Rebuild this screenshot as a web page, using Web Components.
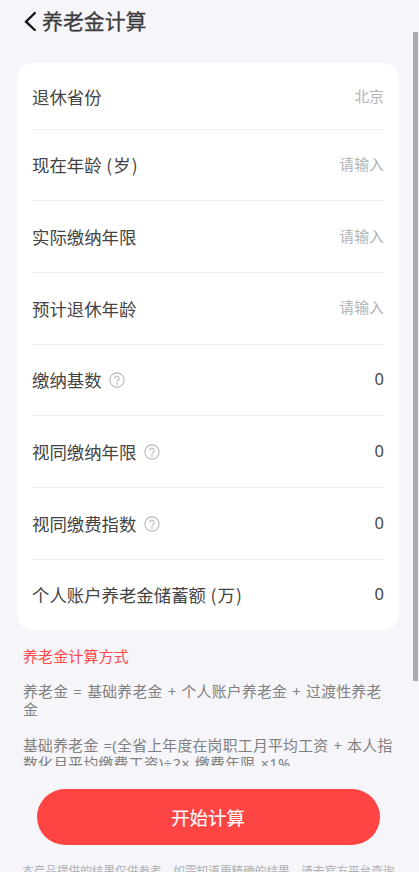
<!DOCTYPE html>
<html lang="zh-CN"><head><meta charset="utf-8"><title>养老金计算</title>
<style>html,body{margin:0;height:100%;overflow:hidden;background:#f5f5fa}body{font-family:"Noto Sans CJK SC",sans-serif;color:#444}</style></head><body>
<pension-page></pension-page>
<script>
const define=(name,html)=>customElements.define(name,class extends HTMLElement{
  constructor(){super();this.attachShadow({mode:'open'}).innerHTML=html;}
});
define('page-header',`<style>:host{display:flex;box-sizing:border-box;height:63px;padding:5px 0 0 24px;align-items:flex-start;color:#3c3c3c;font-size:20.9px;line-height:30px;-webkit-text-stroke:.3px #3c3c3c}
svg{width:13px;height:20px;margin:6px 5px 0 0;flex:none}</style>
<svg viewBox="0 0 13 20"><path d="M10.8 2 2 10.7 10.8 19" fill="none" stroke="#111" stroke-width="2.3" stroke-linecap="round"/></svg><slot></slot>`);
define('help-icon',`<style>:host{display:block;width:16px;height:16px}svg{display:block}</style>
<svg width="16" height="16" viewBox="0 0 16 16" fill="none" stroke="#b8b8b8" stroke-width="1.1"><circle cx="8" cy="8" r="7.1"/><path d="M5.8 6.3a2.2 2.2 0 1 1 3.5 1.8C8.4 8.7 8 9 8 10" stroke-linecap="round"/><circle cx="8" cy="11.8" r=".35"/></svg>`);
define('form-card',`<style>:host{display:block;box-sizing:border-box;width:382.5px;height:567.3px;margin-left:16.5px;padding:0 15px 0 15.5px;background:#fff;border-radius:16px}</style><slot></slot>`);
customElements.define('form-row',class extends HTMLElement{
  connectedCallback(){
    this.attachShadow({mode:'open'}).innerHTML=`<style>
:host{display:flex;box-sizing:border-box;height:71.7px;align-items:center;border-bottom:1px solid #eee}
:host([first]){height:66.5px;padding-top:2px}:host([last]){border:0;height:70px}
.label{font-size:17.4px;line-height:26px;white-space:pre;padding-top:1px}
.unit{margin-left:4.6px;letter-spacing:1.1px}
help-icon{margin:1px 0 0 7.7px}
.value{margin-left:auto;font-size:14.9px;line-height:24px;color:#b3b3b3;padding-bottom:2px}
.number{color:#444;font:16.5px/24px "Noto Sans",sans-serif;padding-bottom:1.5px}
</style><span class="label"><slot></slot>${this.hasAttribute('unit')?`<span class="unit">(${this.getAttribute('unit')})</span>`:''}</span>${this.hasAttribute('help')?'<help-icon></help-icon>':''}<span class="value ${this.getAttribute('value')==='0'?'number':''}">${this.getAttribute('value')}</span>`;
  }
});
define('formula-notes',`<style>:host{display:block;height:136px;overflow:hidden;padding-left:23px;font-family:"Noto Sans","Noto Sans CJK SC",sans-serif;font-size:14.8px;line-height:18px;color:#808080;white-space:nowrap}
h2{margin:0;padding-top:14.6px;height:29.5px;line-height:22px;font-size:15.1px;font-weight:400;color:#ff4b4b;box-sizing:border-box;margin-bottom:22.7px}
p{margin:0 0 17.5px;letter-spacing:.3px;word-spacing:.9px}span{display:block}</style>
<h2>养老金计算方式</h2><p><span>养老金 = 基础养老金 + 个人账户养老金 + 过渡性养老</span><span>金</span></p><p><span>基础养老金 =(全省上年度在岗职工月平均工资 + 本人指</span><span>数化月平均缴费工资)÷2× 缴费年限 ×1%</span></p>`);
define('action-button',`<style>:host{display:block;margin:22.7px 0 0 36.5px}button{display:block;box-sizing:border-box;width:343px;height:56px;padding:0;border:0;border-radius:28px;background:#ff4444;color:#fff;font:400 18.4px/28px "Noto Sans CJK SC",sans-serif;-webkit-text-stroke:.15px #fff}</style><button><slot></slot></button>`);
define('page-disclaimer',`<style>:host{display:block;padding:16px 0 0 22px;font-size:11.65px;line-height:18px;color:#b0b0b3;white-space:nowrap}</style><slot></slot>`);
define('scroll-thumb',`<style>:host{position:absolute;right:1px;top:32px;width:5px;height:649px;background:#aaa}</style>`);
define('pension-page',`<style>:host{display:block;position:relative;height:872px;width:419px;overflow:hidden;background:#f5f5fa}</style>
<page-header>养老金计算</page-header>
<form-card><form-row first value="北京">退休省份</form-row><form-row value="请输入" unit="岁">现在年龄</form-row><form-row value="请输入">实际缴纳年限</form-row><form-row value="请输入">预计退休年龄</form-row><form-row value="0" help>缴纳基数</form-row><form-row value="0" help>视同缴纳年限</form-row><form-row value="0" help>视同缴费指数</form-row><form-row value="0" unit="万" last>个人账户养老金储蓄额</form-row></form-card>
<formula-notes></formula-notes><action-button>开始计算</action-button><page-disclaimer>本产品提供的结果仅供参考，如需知道更精确的结果，请去官方平台查询</page-disclaimer><scroll-thumb></scroll-thumb>`);
</script></body></html>
